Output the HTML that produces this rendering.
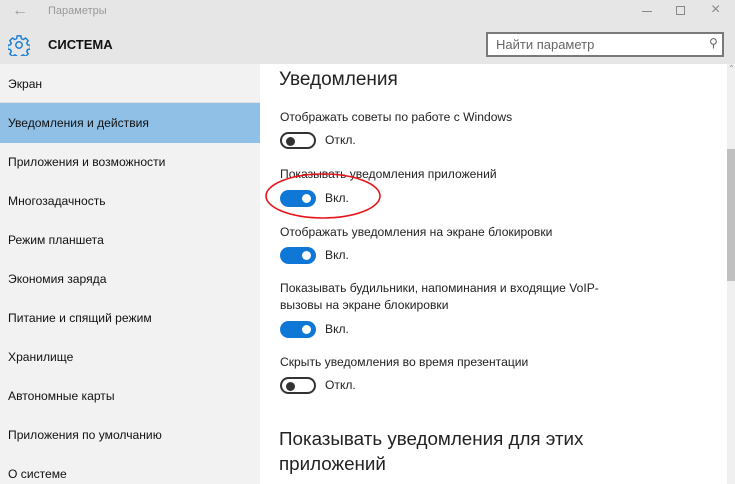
<!DOCTYPE html>
<html><head><meta charset="utf-8"><style>
*{margin:0;padding:0;box-sizing:border-box}
body{width:735px;height:484px;overflow:hidden;position:relative;background:#fff;font-family:"Liberation Sans","DejaVu Sans",sans-serif;color:#000}
.a{position:absolute;white-space:nowrap}
.side{position:absolute;left:0;top:64px;width:260px;height:420px;background:#f2f2f2}
.it{position:absolute;left:8px;font-size:12.1px;color:#111}
.lbl{position:absolute;left:280px;font-size:12.1px;color:#222;white-space:nowrap}
.tg{position:absolute;left:280px;width:36px;height:17px;border-radius:9px}
.on{background:#0f78d6}
.on::after{content:"";position:absolute;right:5px;top:4px;width:9px;height:9px;border-radius:50%;background:#fff}
.off{border:2px solid #333;background:#fff}
.off::after{content:"";position:absolute;left:4px;top:2.5px;width:9px;height:9px;border-radius:50%;background:#333}
.st{position:absolute;left:325px;font-size:12.1px;color:#222}
</style></head><body>
<div class="a" style="left:0;top:0;width:735px;height:64px;background:#e6e6e6"></div>
<div class="a" style="left:12px;top:2px;font-size:16px;color:#999">&#8592;</div>
<div class="a" style="left:48px;top:5px;font-size:11px;color:#999">Параметры</div>
<div class="a" style="left:642px;top:11px;width:10px;height:1px;background:#888"></div>
<div class="a" style="left:676px;top:6px;width:9px;height:9px;border:1px solid #888"></div>
<div class="a" style="left:711px;top:1px;font-size:16px;color:#888">&#215;</div>
<svg class="a" style="left:8px;top:34px" width="22" height="22" viewBox="0 0 24 24"><path fill="none" stroke="#1a7fd4" stroke-width="1.6" d="M10 2h4l.6 3 2 1 2.6-1.6 2.8 2.8-1.6 2.6 1 2 3 .6v4l-3 .6-1 2 1.6 2.6-2.8 2.8-2.6-1.6-2 1-.6 3h-4l-.6-3-2-1-2.6 1.6-2.8-2.8 1.6-2.6-1-2-3-.6v-4l3-.6 1-2-1.6-2.6 2.8-2.8 2.6 1.6 2-1z"/><circle cx="12" cy="12" r="3.5" fill="none" stroke="#1a7fd4" stroke-width="1.6"/></svg>
<div class="a" style="left:48px;top:37px;font-size:13px;font-weight:bold;color:#111">СИСТЕМА</div>
<div class="a" style="left:486px;top:32px;width:238px;height:25px;border:2px solid #7a7a7a;background:#fff"></div>
<div class="a" style="left:496px;top:37px;font-size:13px;color:#666">Найти параметр</div>
<div class="a" style="left:709px;top:36px;font-size:12px;color:#666">&#9906;</div>
<div class="side"></div>
<div class="a" style="left:0;top:102px;width:260px;height:1px;background:#e0e0e0"></div>
<div class="a" style="left:0;top:103px;width:260px;height:40px;background:#90c0e6"></div>
<div class="it" style="top:77px">Экран</div>
<div class="it" style="top:116px">Уведомления и действия</div>
<div class="it" style="top:155px">Приложения и возможности</div>
<div class="it" style="top:194px">Многозадачность</div>
<div class="it" style="top:233px">Режим планшета</div>
<div class="it" style="top:272px">Экономия заряда</div>
<div class="it" style="top:311px">Питание и спящий режим</div>
<div class="it" style="top:350px">Хранилище</div>
<div class="it" style="top:389px">Автономные карты</div>
<div class="it" style="top:428px">Приложения по умолчанию</div>
<div class="it" style="top:467px">О системе</div>
<div class="a" style="left:727px;top:64px;width:8px;height:420px;background:#f0f0f0"></div>
<div class="a" style="left:727px;top:149px;width:8px;height:132px;background:#c0c0c0"></div>
<div class="a" style="left:728px;top:64px;font-size:8px;color:#888">&#8963;</div>
<div class="a" style="left:279px;top:69px;font-size:19px;color:#222">Уведомления</div>
<div class="lbl" style="top:110px">Отображать советы по работе с Windows</div>
<div class="tg off" style="top:132px"></div><div class="st" style="top:133px">Откл.</div>
<div class="lbl" style="top:167px">Показывать уведомления приложений</div>
<div class="tg on" style="top:190px"></div><div class="st" style="top:191px">Вкл.</div>
<div class="lbl" style="top:225px">Отображать уведомления на экране блокировки</div>
<div class="tg on" style="top:247px"></div><div class="st" style="top:248px">Вкл.</div>
<div class="lbl" style="top:281px">Показывать будильники, напоминания и входящие VoIP-</div>
<div class="lbl" style="top:298px">вызовы на экране блокировки</div>
<div class="tg on" style="top:321px"></div><div class="st" style="top:322px">Вкл.</div>
<div class="lbl" style="top:355px">Скрыть уведомления во время презентации</div>
<div class="tg off" style="top:377px"></div><div class="st" style="top:378px">Откл.</div>
<div class="a" style="left:279px;top:428px;font-size:18.8px;color:#222">Показывать уведомления для этих</div>
<div class="a" style="left:279px;top:453px;font-size:18.8px;color:#222">приложений</div>
<svg class="a" style="left:262px;top:170px" width="122" height="52"><ellipse cx="61" cy="26" rx="57" ry="22" fill="none" stroke="#e8141c" stroke-width="1.6"/></svg>
</body></html>
